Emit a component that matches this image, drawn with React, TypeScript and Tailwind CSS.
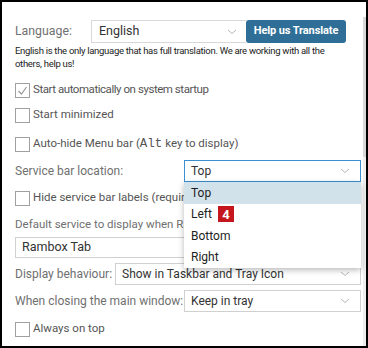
import React from 'react';

const Chevron = () => (
  <svg width="10" height="6" viewBox="0 0 10 6" className="shrink-0">
    <path d="M1 1l4 3.5L9 1" fill="none" stroke="#b5b5b5" strokeWidth="1" />
  </svg>
);

const Checkbox = ({
  checked,
  tight,
  children,
}: {
  checked?: boolean;
  tight?: boolean;
  children: React.ReactNode;
}) => (
  <div className="flex items-center h-[22px]">
    <div className="w-[15px] h-[15px] border border-[#a0a0a0] bg-white flex items-center justify-center shrink-0">
      {checked && (
        <svg width="13" height="13" viewBox="0 0 13 13">
          <path d="M2.5 7l3 3 5-7" fill="none" stroke="#9a9a9a" strokeWidth="1.2" />
        </svg>
      )}
    </div>
    <span
      className={`ml-[3px] text-[11.5px] text-[#555] whitespace-nowrap ${
        tight ? 'tracking-[-0.45px]' : 'tracking-[0px]'
      }`}
    >
      {children}
    </span>
  </div>
);

const Select = ({ value, className = '', focused }: { value: string; className?: string; focused?: boolean }) => (
  <div
    className={`h-[22px] flex items-center justify-between pl-[6px] pr-[10px] bg-white border ${
      focused ? 'border-[#3a8fd0]' : 'border-[#d0d0d0]'
    } ${className}`}
  >
    <span className="text-[12px] text-[#333] whitespace-nowrap">{value}</span>
    <Chevron />
  </div>
);

export default function App() {
  const items = ['Top', 'Left', 'Bottom', 'Right'];
  return (
    <div
      className="w-[368px] h-[348px] border-2 border-black bg-white flex overflow-hidden"
      style={{ fontFamily: 'Roboto, "Liberation Sans", sans-serif' }}
    >
      <div className="flex-1 pl-[13px] pr-[1px] pt-[18px] flex flex-col">
        {/* Language */}
        <div className="flex items-center h-[23px]">
          <span className="w-[76px] text-[12.3px] text-[#707070]">Language:</span>
          <div className="flex-1 h-[23px] flex items-center justify-between pl-[7px] pr-[9px] border border-[#d8d8d8] border-r-0">
            <span className="text-[12.5px] text-[#333]">English</span>
            <Chevron />
          </div>
          <button className="w-[100px] h-[23px] rounded-[3px] bg-[#2f6f97] text-white text-[11px] font-bold tracking-[-0.1px]">
            Help us Translate
          </button>
          <div className="w-[15px]" />
        </div>
        <p className="text-[9.5px] leading-[13px] text-[#222] mt-[1px] tracking-[-0.3px]">
          English is the only language that has full translation. We are working with all the
          <br />
          others, help us!
        </p>

        <div className="mt-[9px]">
          <Checkbox checked tight>
            Start automatically on system startup
          </Checkbox>
        </div>
        <div className="mt-[3px]">
          <Checkbox>Start minimized</Checkbox>
        </div>
        <div className="mt-[7px]">
          <Checkbox>
            Auto-hide Menu bar (
            <span className="text-[12.5px]" style={{ fontFamily: '"Liberation Mono", monospace' }}>
              Alt
            </span>{' '}
            key to display)
          </Checkbox>
        </div>

        {/* Service bar location */}
        <div className="mt-[5px] flex items-center h-[22px]">
          <span className="w-[169px] text-[12px] text-[#707070]">Service bar location:</span>
          <div className="flex-1 relative">
            <Select value="Top" focused />
            <div className="absolute left-0 right-0 top-[22px] z-10 bg-white shadow-[0_2px_6px_rgba(0,0,0,0.28)]">
              {items.map((it, i) => (
                <div
                  key={it}
                  className={`h-[21.5px] flex items-center pl-[7px] text-[12px] text-[#1e1e1e] ${
                    i === 0 ? 'bg-[#d2e2eb]' : ''
                  }`}
                >
                  {it}
                  {it === 'Left' && (
                    <span className="ml-[6px] w-[16px] h-[16px] bg-[#c4161c] text-white text-[13px] font-bold flex items-center justify-center">
                      4
                    </span>
                  )}
                </div>
              ))}
            </div>
          </div>
        </div>

        <div className="mt-[5px]">
          <Checkbox>Hide service bar labels (requires restart to display)</Checkbox>
        </div>

        <div className="mt-[6px] h-[20px] flex items-center text-[11.5px] text-[#707070] whitespace-nowrap">
          Default service to display when Rambox starts
        </div>
        <div className="mt-[2px] h-[21px] flex items-center pl-[6px] border border-[#d0d0d0]">
          <span className="text-[12.5px] text-[#333]">Rambox Tab</span>
        </div>

        <div className="mt-[5px] flex items-center">
          <span className="w-[100px] text-[12px] text-[#707070] whitespace-nowrap">Display behaviour:</span>
          <Select value="Show in Taskbar and Tray Icon" className="flex-1" />
        </div>
        <div className="mt-[5px] flex items-center">
          <span className="w-[169px] text-[12px] text-[#707070] whitespace-nowrap">When closing the main window:</span>
          <Select value="Keep in tray" className="flex-1" />
        </div>

        <div className="mt-[6px]">
          <Checkbox>Always on top</Checkbox>
        </div>
      </div>

      {/* scrollbar */}
      <div className="w-[4px] flex flex-col pl-[1px]">
        <div className="h-[15px] bg-white" />
        <div className="h-[140px] bg-[#d8d8d8]" />
        <div className="flex-1 bg-[#eeeeee]" />
      </div>
    </div>
  );
}
